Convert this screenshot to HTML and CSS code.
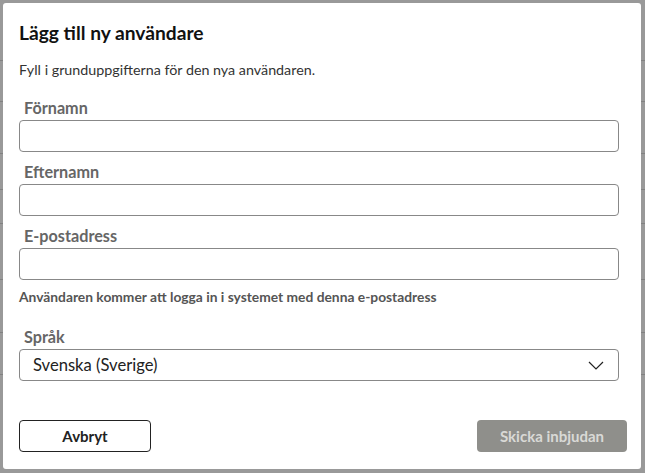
FILE: index.html
```html
<!DOCTYPE html>
<html lang="sv">
<head>
<meta charset="utf-8">
<title>Lägg till ny användare</title>
<link rel="stylesheet" href="styles.css">
</head>
<body>
<div class="page">
  <div class="row r1"></div>
  <div class="row r2"></div>
  <div class="row r3"></div>
  <div class="row r4"></div>
  <div class="row r5"></div>
  <div class="row r6"></div>
  <div class="row r7"></div>
  <div class="row r8"></div>
</div>
<div class="overlay"></div>
<div class="modal" role="dialog">
  <h1 class="title">Lägg till ny användare</h1>
  <p class="subtitle">Fyll i grunduppgifterna för den nya användaren.</p>
  <div class="field">
    <label class="label">Förnamn</label>
    <div class="input"></div>
  </div>
  <div class="field">
    <label class="label">Efternamn</label>
    <div class="input"></div>
  </div>
  <div class="field">
    <label class="label">E-postadress</label>
    <div class="input"></div>
  </div>
  <p class="helper">Användaren kommer att logga in i systemet med denna e-postadress</p>
  <div class="field lang">
    <label class="label">Språk</label>
    <div class="input select">
      <span class="value">Svenska (Sverige)</span>
      <svg class="chev" width="16" height="9" viewBox="0 0 16 9"><path d="M1 1 L8 8 L15 1" fill="none" stroke="#222" stroke-width="1.2"/></svg>
    </div>
  </div>
  <div class="footer">
    <button class="btn cancel">Avbryt</button>
    <button class="btn send" disabled>Skicka inbjudan</button>
  </div>
</div>
</body>
</html>
```
FILE: styles.css
```css
html, body {
  margin: 0;
  padding: 0;
  width: 645px;
  height: 473px;
  overflow: hidden;
  font-family: Lato, "Open Sans", sans-serif;
  background: #fff;
}
.page {
  display: flex;
  flex-direction: column;
}
.row {
  border-bottom: 1px solid #d8d8d8;
}
.r1 { height: 60px; }
.r2 { height: 40px; }
.r3 { height: 51px; }
.r4 { height: 35px; }
.r5 { height: 33px; }
.r6 { height: 55px; }
.r7 { height: 52px; }
.r8 { height: 41px; }
.overlay {
  position: fixed;
  inset: 0;
  background: rgba(0, 0, 0, 0.4);
}
.modal {
  position: absolute;
  left: 3px;
  top: 3px;
  width: 638px;
  height: 466px;
  box-sizing: border-box;
  background: #fff;
  border-radius: 3px;
  padding: 18px 22px 0 16px;
  display: flex;
  flex-direction: column;
}
.title {
  margin: 0;
  font-size: 19.2px;
  line-height: 24px;
  font-weight: 700;
  color: #111;
}
.subtitle {
  margin: 16px 0 0;
  font-size: 14.3px;
  line-height: 18px;
  color: #333;
}
.field {
  display: flex;
  flex-direction: column;
  margin-top: 10px;
}
.subtitle + .field { margin-top: 19px; }
.label {
  font-size: 16.2px;
  line-height: 19px;
  font-weight: 700;
  color: #666;
  padding-left: 5px;
  margin-bottom: 3px;
}
.input {
  width: 600px;
  height: 32px;
  box-sizing: border-box;
  border: 1px solid #888;
  border-radius: 4px;
  background: #fff;
}
.helper {
  margin: 9px 0 0;
  font-size: 13.8px;
  line-height: 16px;
  font-weight: 700;
  color: #555;
}
.field.lang { margin-top: 22px; }
.select {
  display: flex;
  align-items: center;
  justify-content: space-between;
  padding: 0 14px 0 13px;
}
.value {
  font-size: 16.6px;
  color: #222;
}
.chev { display: block; }
.footer {
  margin-top: 39px;
  display: flex;
  justify-content: space-between;
  margin-right: -8px;
}
.btn {
  height: 32px;
  box-sizing: border-box;
  border-radius: 4px;
  font-family: Lato, "Open Sans", sans-serif;
  font-size: 15px;
  font-weight: 700;
}
.cancel {
  width: 132px;
  background: #fff;
  border: 1px solid #222;
  color: #222;
}
.send {
  width: 150px;
  background: #8f8f8b;
  border: none;
  color: #d9d9d6;
}
```
